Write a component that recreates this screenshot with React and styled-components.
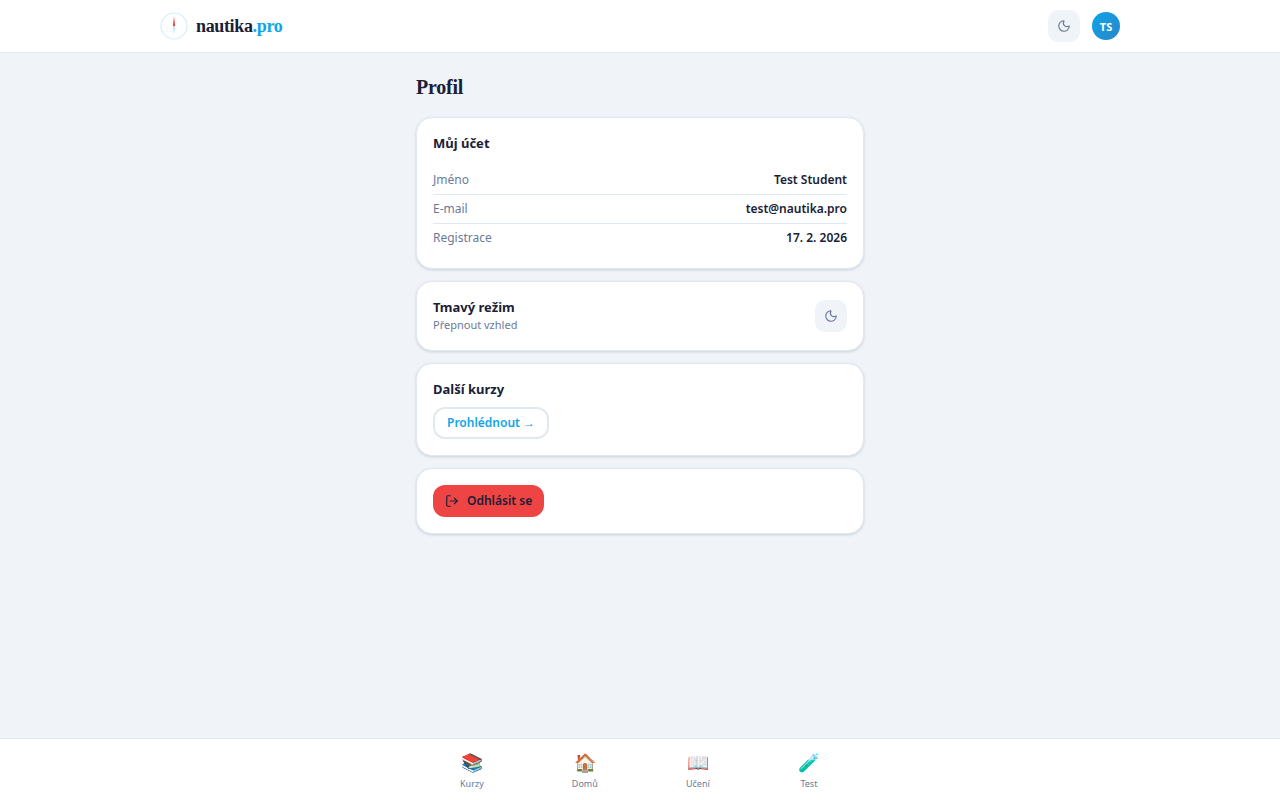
import React from "react";
import styled, { createGlobalStyle } from "styled-components";
import { Moon, LogOut } from "lucide-react";

const Global = createGlobalStyle`
  html, body { margin: 0; padding: 0; }
  body {
    background: #f0f4f9;
    font-family: "Noto Sans", sans-serif;
    color: #1a2035;
  }
  * { box-sizing: border-box; }
`;

const rows = [
  { label: "Jméno", value: "Test Student" },
  { label: "E-mail", value: "test@nautika.pro" },
  { label: "Registrace", value: "17. 2. 2026" },
];

const tabs = [
  { icon: "📚", label: "Kurzy" },
  { icon: "🏠", label: "Domů" },
  { icon: "📖", label: "Učení" },
  { icon: "🧪", label: "Test" },
];

export default function App() {
  return (
    <>
      <Global />
      <Page>
        <Header>
          <HeaderInner>
            <Brand>
              <Compass viewBox="0 0 28 28">
                <circle cx="14" cy="14" r="13" fill="#fff" stroke="#d6eefa" strokeWidth="1.2" />
                <path d="M14 4.5 L15.2 14 L12.8 14 Z" fill="#ef4444" />
                <path d="M14 23 L15.2 14 L12.8 14 Z" fill="#bae6fd" />
              </Compass>
              <Logo>
                nautika<span>.pro</span>
              </Logo>
            </Brand>
            <HeaderActions>
              <IconButton>
                <Moon size={14} strokeWidth={2} />
              </IconButton>
              <Avatar>TS</Avatar>
            </HeaderActions>
          </HeaderInner>
        </Header>

        <Main>
          <Title>Profil</Title>
          <AccountCard>
            <CardTitle>Můj účet</CardTitle>
            <Rows>
              {rows.map((r) => (
                <Row key={r.label}>
                  <RowLabel>{r.label}</RowLabel>
                  <RowValue>{r.value}</RowValue>
                </Row>
              ))}
            </Rows>
          </AccountCard>

          <ThemeCard>
            <div>
              <ThemeTitle>Tmavý režim</ThemeTitle>
              <ThemeHint>Přepnout vzhled</ThemeHint>
            </div>
            <IconButton>
              <Moon size={14} strokeWidth={2} />
            </IconButton>
          </ThemeCard>

          <CoursesCard>
            <CardTitle>Další kurzy</CardTitle>
            <OutlineButton>Prohlédnout →</OutlineButton>
          </CoursesCard>

          <LogoutCard>
            <DangerButton>
              <LogOut size={14} strokeWidth={2} />
              Odhlásit se
            </DangerButton>
          </LogoutCard>
        </Main>

        <BottomNav>
          <NavInner>
            {tabs.map((t) => (
              <NavItem key={t.label}>
                <NavIcon>{t.icon}</NavIcon>
                <NavLabel>{t.label}</NavLabel>
              </NavItem>
            ))}
          </NavInner>
        </BottomNav>
      </Page>
    </>
  );
}

const Page = styled.div`
  height: 800px;
  display: flex;
  flex-direction: column;
  overflow: hidden;
`;

const Header = styled.header`
  height: 53px;
  flex-shrink: 0;
  background: #fff;
  border-bottom: 1px solid #e2e8f0;
`;

const HeaderInner = styled.div`
  width: 960px;
  height: 52px;
  margin: 0 auto;
  display: flex;
  align-items: center;
  justify-content: space-between;
`;

const Brand = styled.div`
  display: flex;
  align-items: center;
  gap: 8px;
`;

const Compass = styled.svg`
  width: 28px;
  height: 28px;
  display: block;
`;

const Logo = styled.div`
  font-family: "Liberation Serif", serif;
  font-weight: 700;
  font-size: 18px;
  letter-spacing: -0.35px;
  color: #1a2035;

  span {
    color: #0ea5e9;
  }
`;

const HeaderActions = styled.div`
  display: flex;
  align-items: center;
  gap: 12px;
`;

const IconButton = styled.div`
  width: 32px;
  height: 32px;
  border-radius: 10px;
  background: #f0f4f9;
  color: #6b7a99;
  display: flex;
  align-items: center;
  justify-content: center;
`;

const Avatar = styled.div`
  width: 28px;
  height: 28px;
  border-radius: 50%;
  background: linear-gradient(135deg, #0ea5e9, #2a85c9);
  color: #fff;
  font-size: 11px;
  font-weight: 700;
  display: flex;
  align-items: center;
  justify-content: center;
`;

const Main = styled.main`
  flex: 1;
  width: 448px;
  margin: 0 auto;
  padding-top: 20px;
  display: flex;
  flex-direction: column;
`;

const Title = styled.h1`
  margin: 0 0 16px;
  font-family: "Liberation Serif", serif;
  font-size: 20px;
  letter-spacing: -0.25px;
  line-height: 28px;
  font-weight: 700;
  color: #1a2035;
`;

const Card = styled.section`
  background: #fff;
  border: 1px solid #e2e8f0;
  border-radius: 16px;
  box-shadow: 0 1px 3px rgba(15, 23, 42, 0.16);
  padding: 15px 16px 16px;
  margin-bottom: 12px;
`;

const AccountCard = styled(Card)`
  height: 152px;
`;

const ThemeCard = styled(Card)`
  height: 70px;
  padding-top: 16px;
  display: flex;
  align-items: center;
  justify-content: space-between;
`;

const CoursesCard = styled(Card)`
  height: 93px;
`;

const LogoutCard = styled(Card)`
  height: 66px;
  padding-top: 16px;
`;

const CardTitle = styled.h2`
  margin: 0 0 8px;
  font-size: 13px;
  line-height: 20px;
  font-weight: 700;
  color: #1a2035;
`;

const Rows = styled.div`
  margin-top: 13px;
`;

const Row = styled.div`
  height: 29px;
  padding-bottom: 2px;
  display: flex;
  align-items: center;
  justify-content: space-between;
  font-size: 12px;
  border-bottom: 1px solid #e2e8f0;

  &:last-child {
    border-bottom: none;
    padding-bottom: 3px;
  }
`;

const RowLabel = styled.span`
  color: #6b7a99;
`;

const RowValue = styled.span`
  font-weight: 600;
  color: #1a2035;
`;

const ThemeTitle = styled.div`
  font-size: 13px;
  line-height: 14px;
  font-weight: 700;
  margin-bottom: 3px;
`;

const ThemeHint = styled.div`
  font-size: 11px;
  line-height: 16px;
  color: #6b7a99;
`;

const OutlineButton = styled.button`
  height: 32px;
  padding: 0 12px 1px;
  background: #fff;
  border: 2px solid #e2e8f0;
  border-radius: 12px;
  font-family: inherit;
  font-size: 12px;
  font-weight: 600;
  color: #0ea5e9;
  display: block;
`;

const DangerButton = styled.button`
  height: 32px;
  padding: 0 12px 1px;
  background: #ef4444;
  border: none;
  border-radius: 12px;
  font-family: inherit;
  font-size: 12px;
  font-weight: 600;
  color: #1a2035;
  display: flex;
  align-items: center;
  gap: 8px;
`;

const BottomNav = styled.nav`
  height: 62px;
  flex-shrink: 0;
  background: #fff;
  border-top: 1px solid #e2e8f0;
`;

const NavInner = styled.div`
  width: 448px;
  height: 100%;
  margin: 0 auto;
  display: flex;
  justify-content: space-around;
  align-items: flex-start;
`;

const NavItem = styled.div`
  display: flex;
  flex-direction: column;
  align-items: center;
  padding-top: 11px;
`;

const NavIcon = styled.div`
  font-size: 18px;
  line-height: 24px;
`;

const NavLabel = styled.div`
  font-size: 9px;
  line-height: 14px;
  margin-top: 3px;
  color: #6b7a99;
`;
